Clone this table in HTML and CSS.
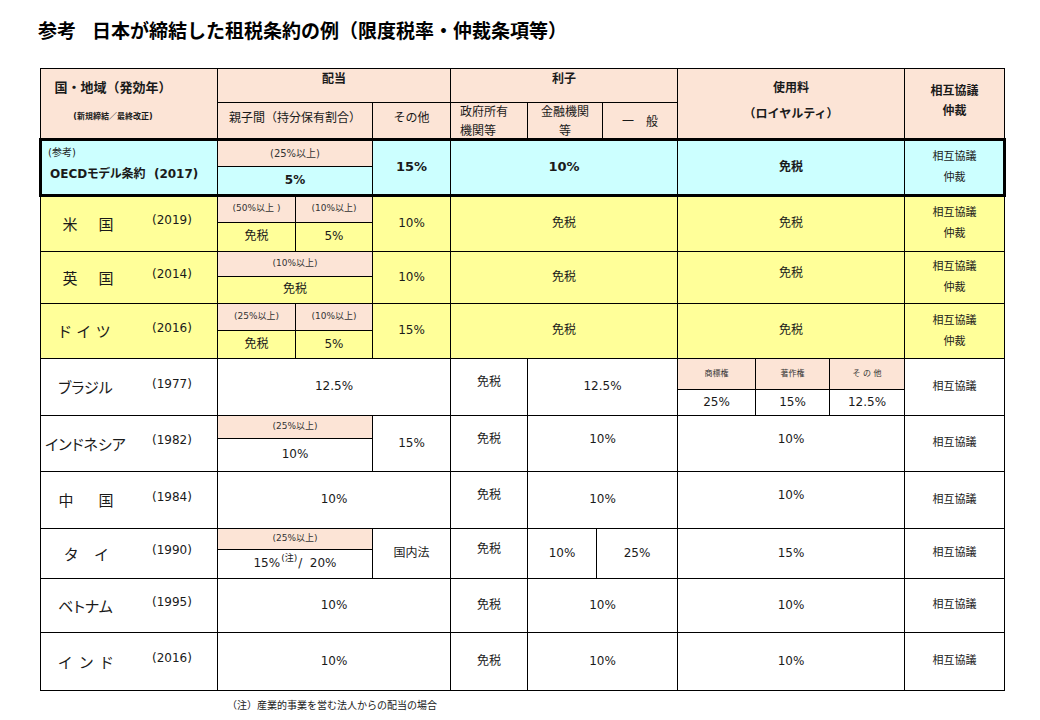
FILE: index.html
```html
<!DOCTYPE html>
<html lang="ja">
<head>
<meta charset="utf-8">
<title>日本が締結した租税条約の例</title>
<link rel="stylesheet" href="styles.css">
</head>
<body>
<div class="page">
  <h1 class="title">参考<span class="gap"></span>日本が締結した租税条約の例（限度税率・仲裁条項等）</h1>
  <div class="table">
    <div class="head">
      <div class="cell h-country"><span class="h-big">国・地域（発効年）</span><span class="h-small">(新規締結／最終改正)</span></div>
      <div class="cell h-top h-div">配当</div>
      <div class="cell h-parent">親子間（持分保有割合）</div>
      <div class="cell h-other">その他</div>
      <div class="cell h-top h-int">利子</div>
      <div class="cell h-intsub">
        <div class="hs vl hs-left">政府所有<br>機関等</div>
        <div class="hs vl">金融機関<br>等</div>
        <div class="hs">一　般</div>
      </div>
      <div class="cell h-roy"><span>使用料</span><span>（ロイヤルティ）</span></div>
      <div class="cell h-map"><span>相互協議</span><span>仲裁</span></div>
    </div>

    <div class="row oecd r-oecd">
      <div class="cell oecd-name"><span class="ref">(参考)</span><span class="model">OECDモデル条約 &nbsp;(2017)</span></div>
      <div class="cell sub sub1">
        <div class="band band-lg">(25%以上)</div>
        <div class="b">5%</div>
      </div>
      <div class="cell b big">15%</div>
      <div class="cell b big">10%</div>
      <div class="cell b">免税</div>
      <div class="cell pair"><span>相互協議</span><span>仲裁</span></div>
    </div>

    <div class="row yel r-us">
      <div class="cell country"><span class="cname ls-2k">米　国</span><span class="year">(2019)</span></div>
      <div class="cell sub sub2">
        <div class="band vl">(50%以上 )</div>
        <div class="band">(10%以上)</div>
        <div class="vl">免税</div>
        <div>5%</div>
      </div>
      <div class="cell">10%</div>
      <div class="cell">免税</div>
      <div class="cell">免税</div>
      <div class="cell pair"><span>相互協議</span><span>仲裁</span></div>
    </div>

    <div class="row yel r-uk">
      <div class="cell country"><span class="cname ls-2k">英　国</span><span class="year">(2014)</span></div>
      <div class="cell sub sub1">
        <div class="band">(10%以上)</div>
        <div>免税</div>
      </div>
      <div class="cell">10%</div>
      <div class="cell">免税</div>
      <div class="cell up">免税</div>
      <div class="cell pair"><span>相互協議</span><span>仲裁</span></div>
    </div>

    <div class="row yel r-de">
      <div class="cell country"><span class="cname ls-3">ドイツ</span><span class="year">(2016)</span></div>
      <div class="cell sub sub2">
        <div class="band vl">(25%以上)</div>
        <div class="band">(10%以上)</div>
        <div class="vl">免税</div>
        <div>5%</div>
      </div>
      <div class="cell">15%</div>
      <div class="cell">免税</div>
      <div class="cell">免税</div>
      <div class="cell pair"><span>相互協議</span><span>仲裁</span></div>
    </div>

    <div class="row r-br">
      <div class="cell country"><span class="cname">ブラジル</span><span class="year">(1977)</span></div>
      <div class="cell span2">12.5%</div>
      <div class="cell sub int2">
        <div class="vl up">免税</div>
        <div>12.5%</div>
      </div>
      <div class="cell sub roy3">
        <div class="band band-xs vl">商標権</div>
        <div class="band band-xs vl">著作権</div>
        <div class="band band-xs">そ の 他</div>
        <div class="vl">25%</div>
        <div class="vl">15%</div>
        <div>12.5%</div>
      </div>
      <div class="cell">相互協議</div>
    </div>

    <div class="row r-id">
      <div class="cell country"><span class="cname">インドネシア</span><span class="year">(1982)</span></div>
      <div class="cell sub sub1">
        <div class="band">(25%以上)</div>
        <div>10%</div>
      </div>
      <div class="cell">15%</div>
      <div class="cell sub int2">
        <div class="vl up">免税</div>
        <div class="up">10%</div>
      </div>
      <div class="cell up">10%</div>
      <div class="cell">相互協議</div>
    </div>

    <div class="row r-cn">
      <div class="cell country"><span class="cname ls-2w">中　国</span><span class="year">(1984)</span></div>
      <div class="cell span2">10%</div>
      <div class="cell sub int2">
        <div class="vl up">免税</div>
        <div>10%</div>
      </div>
      <div class="cell up">10%</div>
      <div class="cell">相互協議</div>
    </div>

    <div class="row r-th">
      <div class="cell country"><span class="cname ls-2n">タ　イ</span><span class="year">(1990)</span></div>
      <div class="cell sub sub1">
        <div class="band">(25%以上)</div>
        <div><span>15%<sup class="note-mark">(注)</sup>/&nbsp; 20%</span></div>
      </div>
      <div class="cell">国内法</div>
      <div class="cell sub int3">
        <div class="vl up">免税</div>
        <div class="vl">10%</div>
        <div>25%</div>
      </div>
      <div class="cell">15%</div>
      <div class="cell">相互協議</div>
    </div>

    <div class="row r-vn">
      <div class="cell country"><span class="cname">ベトナム</span><span class="year">(1995)</span></div>
      <div class="cell span2">10%</div>
      <div class="cell sub int2">
        <div class="vl">免税</div>
        <div>10%</div>
      </div>
      <div class="cell">10%</div>
      <div class="cell">相互協議</div>
    </div>

    <div class="row r-in">
      <div class="cell country"><span class="cname ls-3w">インド</span><span class="year">(2016)</span></div>
      <div class="cell span2">10%</div>
      <div class="cell sub int2">
        <div class="vl">免税</div>
        <div>10%</div>
      </div>
      <div class="cell">10%</div>
      <div class="cell">相互協議</div>
    </div>
  </div>
  <p class="note">（注）産業的事業を営む法人からの配当の場合</p>
</div>
</body>
</html>
```

FILE: styles.css
```css
* { box-sizing: border-box; }
html, body { margin: 0; padding: 0; background: #fff; }
body {
  font-family: "DejaVu Sans", "Noto Sans CJK JP", sans-serif;
  font-size: 12px;
  color: #1a1a1a;
}
.page { width: 1040px; height: 720px; padding: 16px 0 0 38px; }

.title {
  margin: 0;
  font-family: "Noto Sans CJK JP", sans-serif;
  font-weight: 700;
  font-size: 19px;
  line-height: 28px;
  color: #000;
}
.title .gap { display: inline-block; width: 16px; }

.table {
  margin: 24px 0 0 2px;
  width: 965px;
  border-left: 1px solid #000;
  border-top: 1px solid #000;
}

.head, .row {
  display: grid;
  grid-template-columns: 177px 155px 78px 227px 227px 100px;
}
.head { grid-template-rows: 34px 37px; background: #fce4d6; }

.cell {
  border-right: 1px solid #000;
  border-bottom: 1px solid #000;
  display: flex;
  align-items: center;
  justify-content: center;
  text-align: center;
  line-height: 1.3;
}

/* header */
.h-country {
  grid-column: 1; grid-row: 1 / 3;
  flex-direction: column;
  justify-content: flex-start;
  padding: 10px 32px 0 0;
  gap: 14px;
  font-weight: 700;
}
.h-big { font-size: 13px; line-height: 18px; }
.h-small { font-size: 8px; line-height: 12px; }
.h-top { align-items: flex-start; padding-top: 1px; font-weight: 700; line-height: 18px; }
.h-div { grid-column: 2 / 4; grid-row: 1; }
.h-int { grid-column: 4; grid-row: 1; }
.h-parent { grid-column: 2; grid-row: 2; padding-bottom: 5px; }
.h-other { grid-column: 3; grid-row: 2; padding-bottom: 5px; }
.h-intsub {
  grid-column: 4; grid-row: 2;
  display: grid;
  align-items: stretch;
  justify-content: stretch;
  grid-template-columns: 77px 75px 1fr;
}
.hs {
  display: flex; align-items: center; justify-content: center;
  line-height: 19px; padding-bottom: 2px;
}
.hs-left { justify-content: flex-start; text-align: left; padding-left: 9px; }
.h-roy {
  grid-column: 5; grid-row: 1 / 3;
  flex-direction: column; justify-content: flex-start;
  padding-top: 10px; gap: 8px;
  font-weight: 700; line-height: 18px;
}
.h-map {
  grid-column: 6; grid-row: 1 / 3;
  flex-direction: column; justify-content: flex-start;
  padding-top: 13px; gap: 2px;
  font-weight: 700; line-height: 18px;
}

/* sub divisions */
.vl { border-right: 1px solid #000; }
.sub { display: grid; align-items: stretch; justify-content: stretch; }
.sub > * { display: flex; align-items: center; justify-content: center; }
.sub1 { grid-template-columns: 1fr; grid-template-rows: var(--band) 1fr; }
.sub2 { grid-template-columns: 78px 1fr; grid-template-rows: var(--band) 1fr; }
.int2 { grid-template-columns: 77px 1fr; }
.int3 { grid-template-columns: 77px 69px 1fr; }
.roy3 { grid-template-columns: 78px 74px 1fr; grid-template-rows: 31px 1fr; }
.span2 { grid-column: span 2; }

.band {
  background: #fce4d6;
  border-bottom: 1px solid #000;
  font-size: 9px;
  color: #333;
}
.band-lg { font-size: 10px; }
.band-xs { font-size: 8px; }

/* rows */
.r-oecd { height: 56px; --band: 27px; }
.r-us { height: 56px; --band: 27px; }
.r-uk { height: 52px; --band: 25px; }
.r-de { height: 55px; --band: 27px; }
.r-br { height: 57px; }
.r-id { height: 56px; --band: 23px; }
.r-cn { height: 57px; }
.r-th { height: 50px; --band: 21px; }
.r-vn { height: 54px; }
.r-in { height: 58px; }

.oecd { position: relative; }
.oecd .cell { background: #ccffff; }
.oecd .band { background: #fce4d6; }
.oecd::after {
  content: "";
  position: absolute;
  left: -2px; top: -2px; right: -1px; bottom: -1px;
  border: 3px solid #000;
  pointer-events: none;
}
.yel .cell { background: #ffff99; }
.yel .band { background: #fce4d6; }

.oecd-name {
  flex-direction: column;
  align-items: flex-start;
  justify-content: flex-start;
  padding: 6px 0 0 7px;
}
.ref { font-size: 10px; line-height: 14px; }
.model {
  font-weight: 700; font-size: 12px; line-height: 18px; margin: 5px 0 0 2px;
  font-feature-settings: "palt";
}
.b { font-weight: 700; }
.big { font-size: 13px; }

.pair {
  flex-direction: column;
  gap: 5px;
  font-size: 11px;
  line-height: 16px;
}
.pair span { display: block; }
.r-br > .cell:last-child, .r-id > .cell:last-child, .r-cn > .cell:last-child,
.r-th > .cell:last-child, .r-vn > .cell:last-child, .r-in > .cell:last-child { font-size: 11px; }
.up { padding-bottom: 8px; }

.country {
  display: grid;
  grid-template-columns: 89px 1fr;
  align-items: center;
  justify-content: stretch;
}
.cname {
  font-family: "Noto Sans CJK JP", sans-serif;
  font-size: 15px;
  font-feature-settings: "palt";
  text-align: center;
  line-height: 20px;
}
.ls-2k { letter-spacing: 3px; padding-left: 8px; }
.ls-2w { letter-spacing: 5px; padding-left: 6px; }
.ls-2n { letter-spacing: 1px; padding-left: 2px; }
.ls-3 { letter-spacing: 6px; padding-left: 4px; }
.ls-3w { letter-spacing: 8px; padding-left: 8px; }
.year { text-align: left; padding: 0 0 5px 22px; font-size: 12px; }

.note-mark { font-size: 9px; vertical-align: 6px; line-height: 0; margin: 0 1px; }

.note {
  margin: 7px 0 0 189px;
  font-family: "Noto Sans CJK JP", sans-serif;
  font-size: 10px;
  line-height: 14px;
}
```
